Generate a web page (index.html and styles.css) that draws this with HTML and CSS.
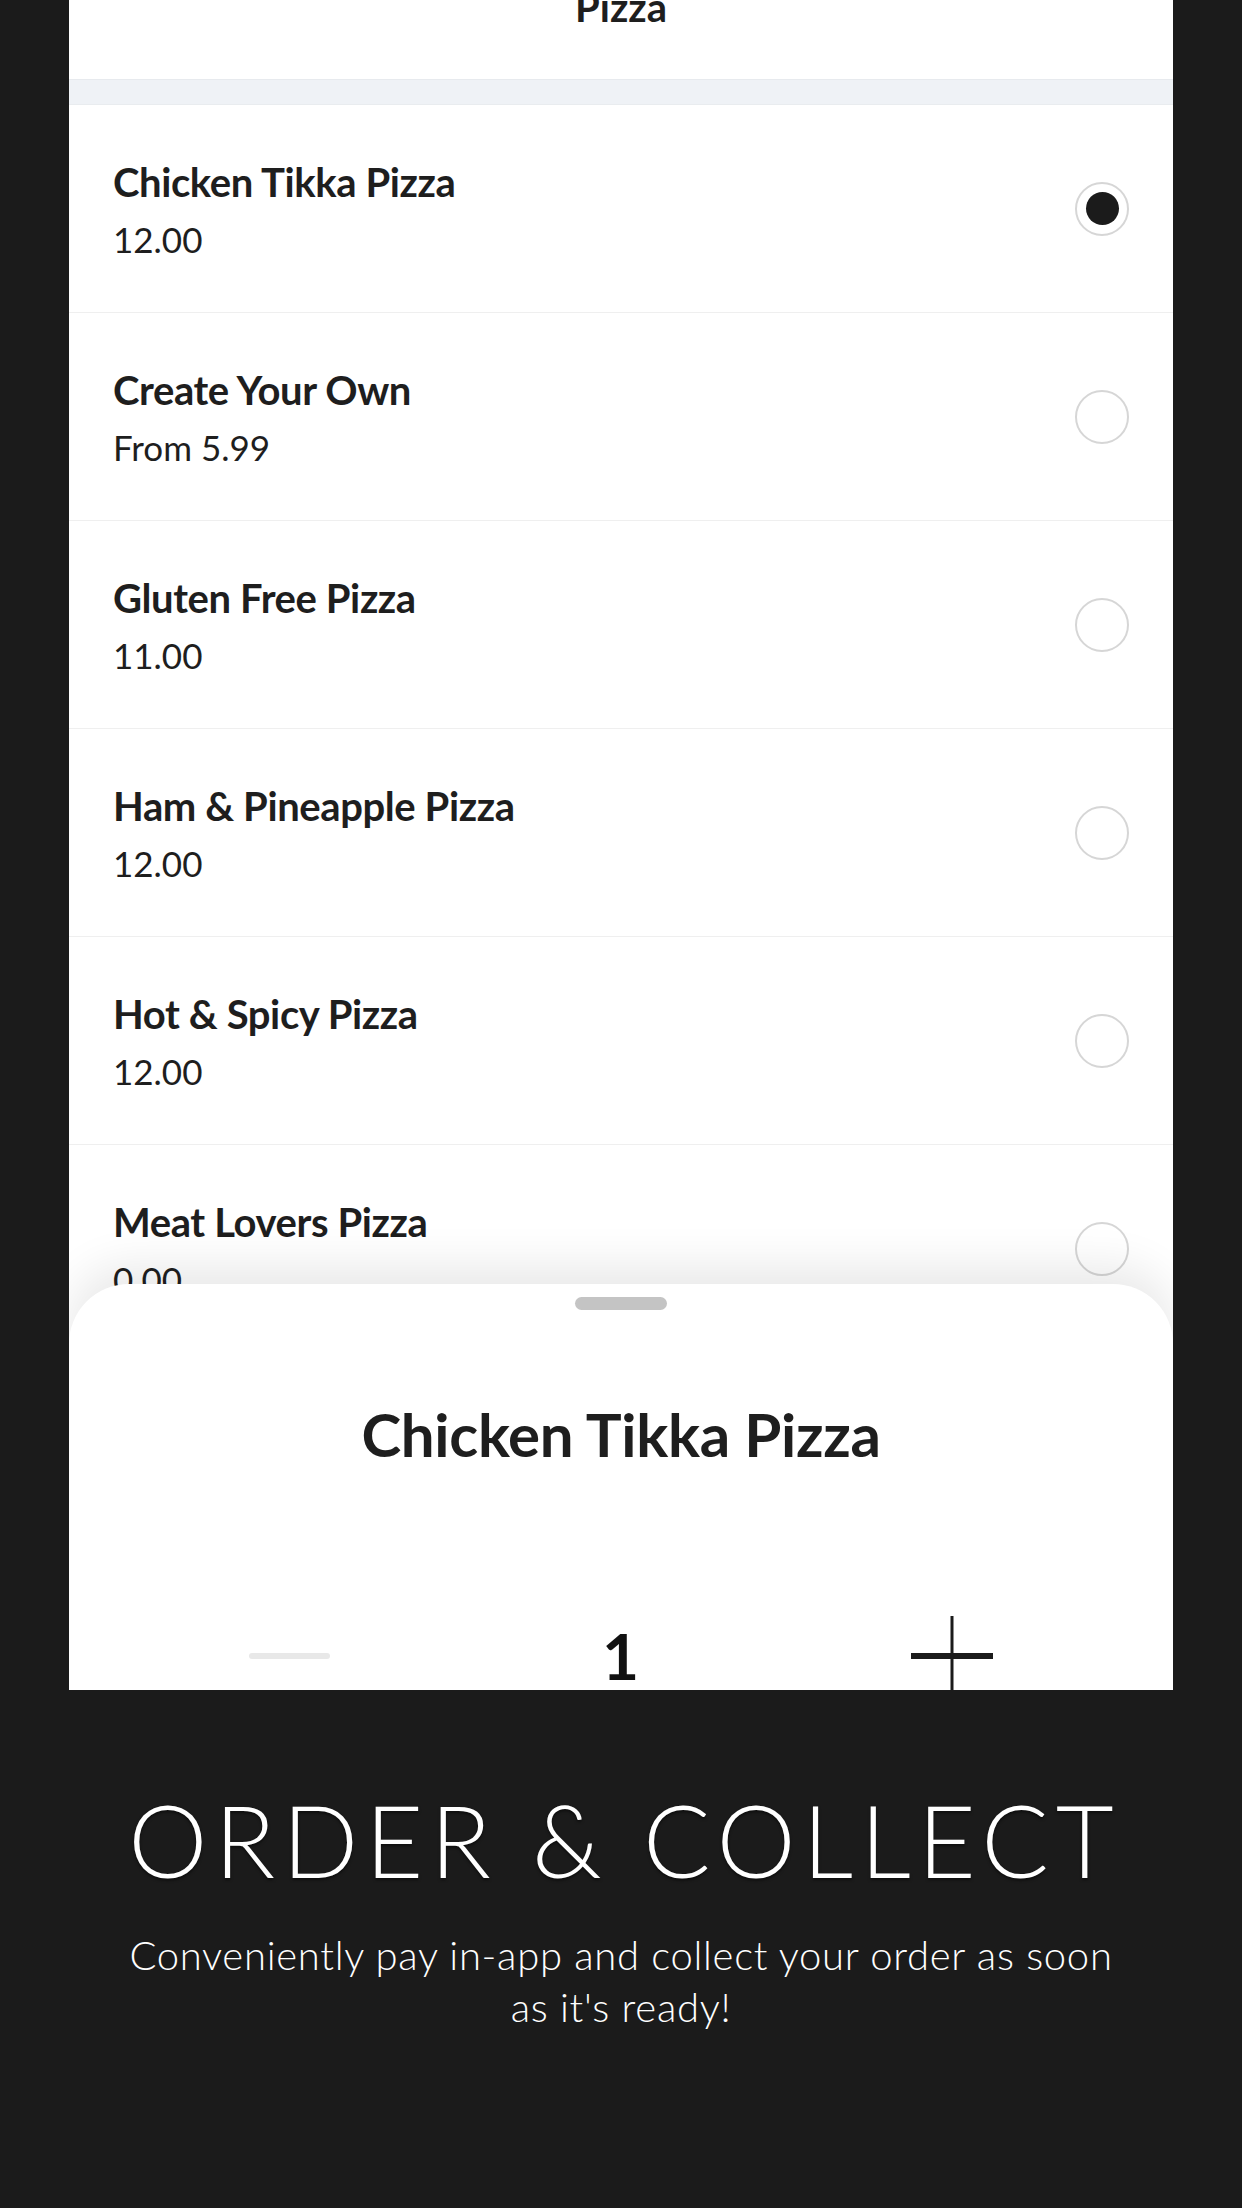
FILE: index.html
```html
<!DOCTYPE html>
<html lang="en">
<head>
  <meta charset="UTF-8" />
  <meta name="viewport" content="width=device-width, initial-scale=1.0"/>
  <title>Order &amp; Collect</title>
  <link rel="stylesheet" href="styles.css">
</head>
<body>
  <div class="screen">
    <header class="menu-head">
      <h2>Pizza</h2>
    </header>
    <div class="band"></div>

    <!-- Menu items -->
    <ul class="items">
      <li class="item">
        <div class="item-text">
          <div class="item-name">Chicken Tikka Pizza</div>
          <div class="item-price">12.00</div>
        </div>
        <span class="radio checked"></span>
      </li>
      <li class="item">
        <div class="item-text">
          <div class="item-name">Create Your Own</div>
          <div class="item-price">From 5.99</div>
        </div>
        <span class="radio"></span>
      </li>
      <li class="item">
        <div class="item-text">
          <div class="item-name">Gluten Free Pizza</div>
          <div class="item-price">11.00</div>
        </div>
        <span class="radio"></span>
      </li>
      <li class="item">
        <div class="item-text">
          <div class="item-name">Ham &amp; Pineapple Pizza</div>
          <div class="item-price">12.00</div>
        </div>
        <span class="radio"></span>
      </li>
      <li class="item">
        <div class="item-text">
          <div class="item-name">Hot &amp; Spicy Pizza</div>
          <div class="item-price">12.00</div>
        </div>
        <span class="radio"></span>
      </li>
      <li class="item">
        <div class="item-text">
          <div class="item-name">Meat Lovers Pizza</div>
          <div class="item-price">0.00</div>
        </div>
        <span class="radio"></span>
      </li>
    </ul>

    <!-- Bottom sheet -->
    <div class="sheet">
      <div class="handle"></div>
      <div class="sheet-title">Chicken Tikka Pizza</div>
      <div class="qty">
        <span class="minus"></span>
        <span class="count">1</span>
        <svg class="plus" width="82" height="82" viewBox="0 0 82 82">
          <line x1="0" y1="41" x2="82" y2="41" stroke="#1b1b1b" stroke-width="6" stroke-linecap="round"/>
          <line x1="41" y1="1" x2="41" y2="82" stroke="#1b1b1b" stroke-width="3"/>
        </svg>
      </div>
    </div>
  </div>

  <section class="promo">
    <h1>ORDER &amp; COLLECT</h1>
    <p>Conveniently pay in-app and collect your order as soon as it's ready!</p>
  </section>
</body>
</html>
```

FILE: styles.css
```css
body {
  margin: 0;
  background: #1b1b1b;
  font-family: Lato, "Open Sans", sans-serif;
  color: #1e1e1e;
}

.screen {
  position: relative;
  margin: 0 69px;
  height: 1690px;
  background: #fff;
  overflow: hidden;
}

/* Header */
.menu-head {
  display: flow-root;
  height: 79px;
  text-align: center;
}

.menu-head h2 {
  margin: -13px 0 0;
  font-size: 40px;
  line-height: 40px;
  font-weight: 700;
}

.band {
  height: 24px;
  background: #eff2f6;
  border-top: 1px solid #e7eaee;
  border-bottom: 1px solid #e9ecef;
}

/* Items */
.items {
  list-style: none;
  margin: 0;
  padding: 0;
}

.item {
  display: flex;
  align-items: center;
  justify-content: space-between;
  height: 207px;
  padding: 0 44px;
  border-bottom: 1px solid #efefef;
}

.item-text {
  display: flex;
  flex-direction: column;
  gap: 12px;
}

.item-name {
  font-size: 40px;
  line-height: 48px;
  font-weight: 700;
  letter-spacing: -0.4px;
}

.item-price {
  font-size: 35px;
  line-height: 42px;
}

.radio {
  box-sizing: border-box;
  width: 54px;
  height: 54px;
  border: 2px solid #d6d6d6;
  border-radius: 50%;
  display: flex;
  align-items: center;
  justify-content: center;
}

.radio.checked::after {
  content: "";
  width: 33px;
  height: 33px;
  border-radius: 50%;
  background: #1b1b1b;
}

/* Sheet */
.sheet {
  position: absolute;
  left: 0;
  right: 0;
  top: 1284px;
  bottom: 0;
  background: #fff;
  border-radius: 60px 60px 0 0;
  box-shadow: 0 -18px 45px rgba(0, 0, 0, 0.09);
  display: flex;
  flex-direction: column;
  align-items: center;
}

.sheet > * {
  flex-shrink: 0;
}

.handle {
  margin-top: 13px;
  width: 92px;
  height: 13px;
  border-radius: 7px;
  background: #c4c4c4;
}

.sheet-title {
  margin-top: 88px;
  font-size: 60px;
  line-height: 72px;
  font-weight: 700;
  letter-spacing: -0.3px;
}

.qty {
  align-self: stretch;
  margin-top: 145px;
  padding: 0 180px;
  display: flex;
  align-items: center;
  justify-content: space-between;
}

.minus {
  width: 81px;
  height: 6px;
  border-radius: 3px;
  background: #e8e8e8;
}

.count {
  font-size: 64px;
  line-height: 64px;
  font-weight: 700;
  color: #111;
}

/* Promo */
.promo {
  padding-top: 89px;
  text-align: center;
  color: #fff;
}

.promo h1 {
  margin: 0;
  font-size: 100px;
  line-height: 120px;
  font-weight: 300;
  letter-spacing: 7px;
  padding-left: 7px;
  text-shadow: 0 2px 3px rgba(0, 0, 0, 0.5);
}

.promo p {
  margin: 30px auto 0;
  width: 1000px;
  font-size: 40px;
  line-height: 52px;
  font-weight: 300;
  letter-spacing: 0.7px;
}
```
